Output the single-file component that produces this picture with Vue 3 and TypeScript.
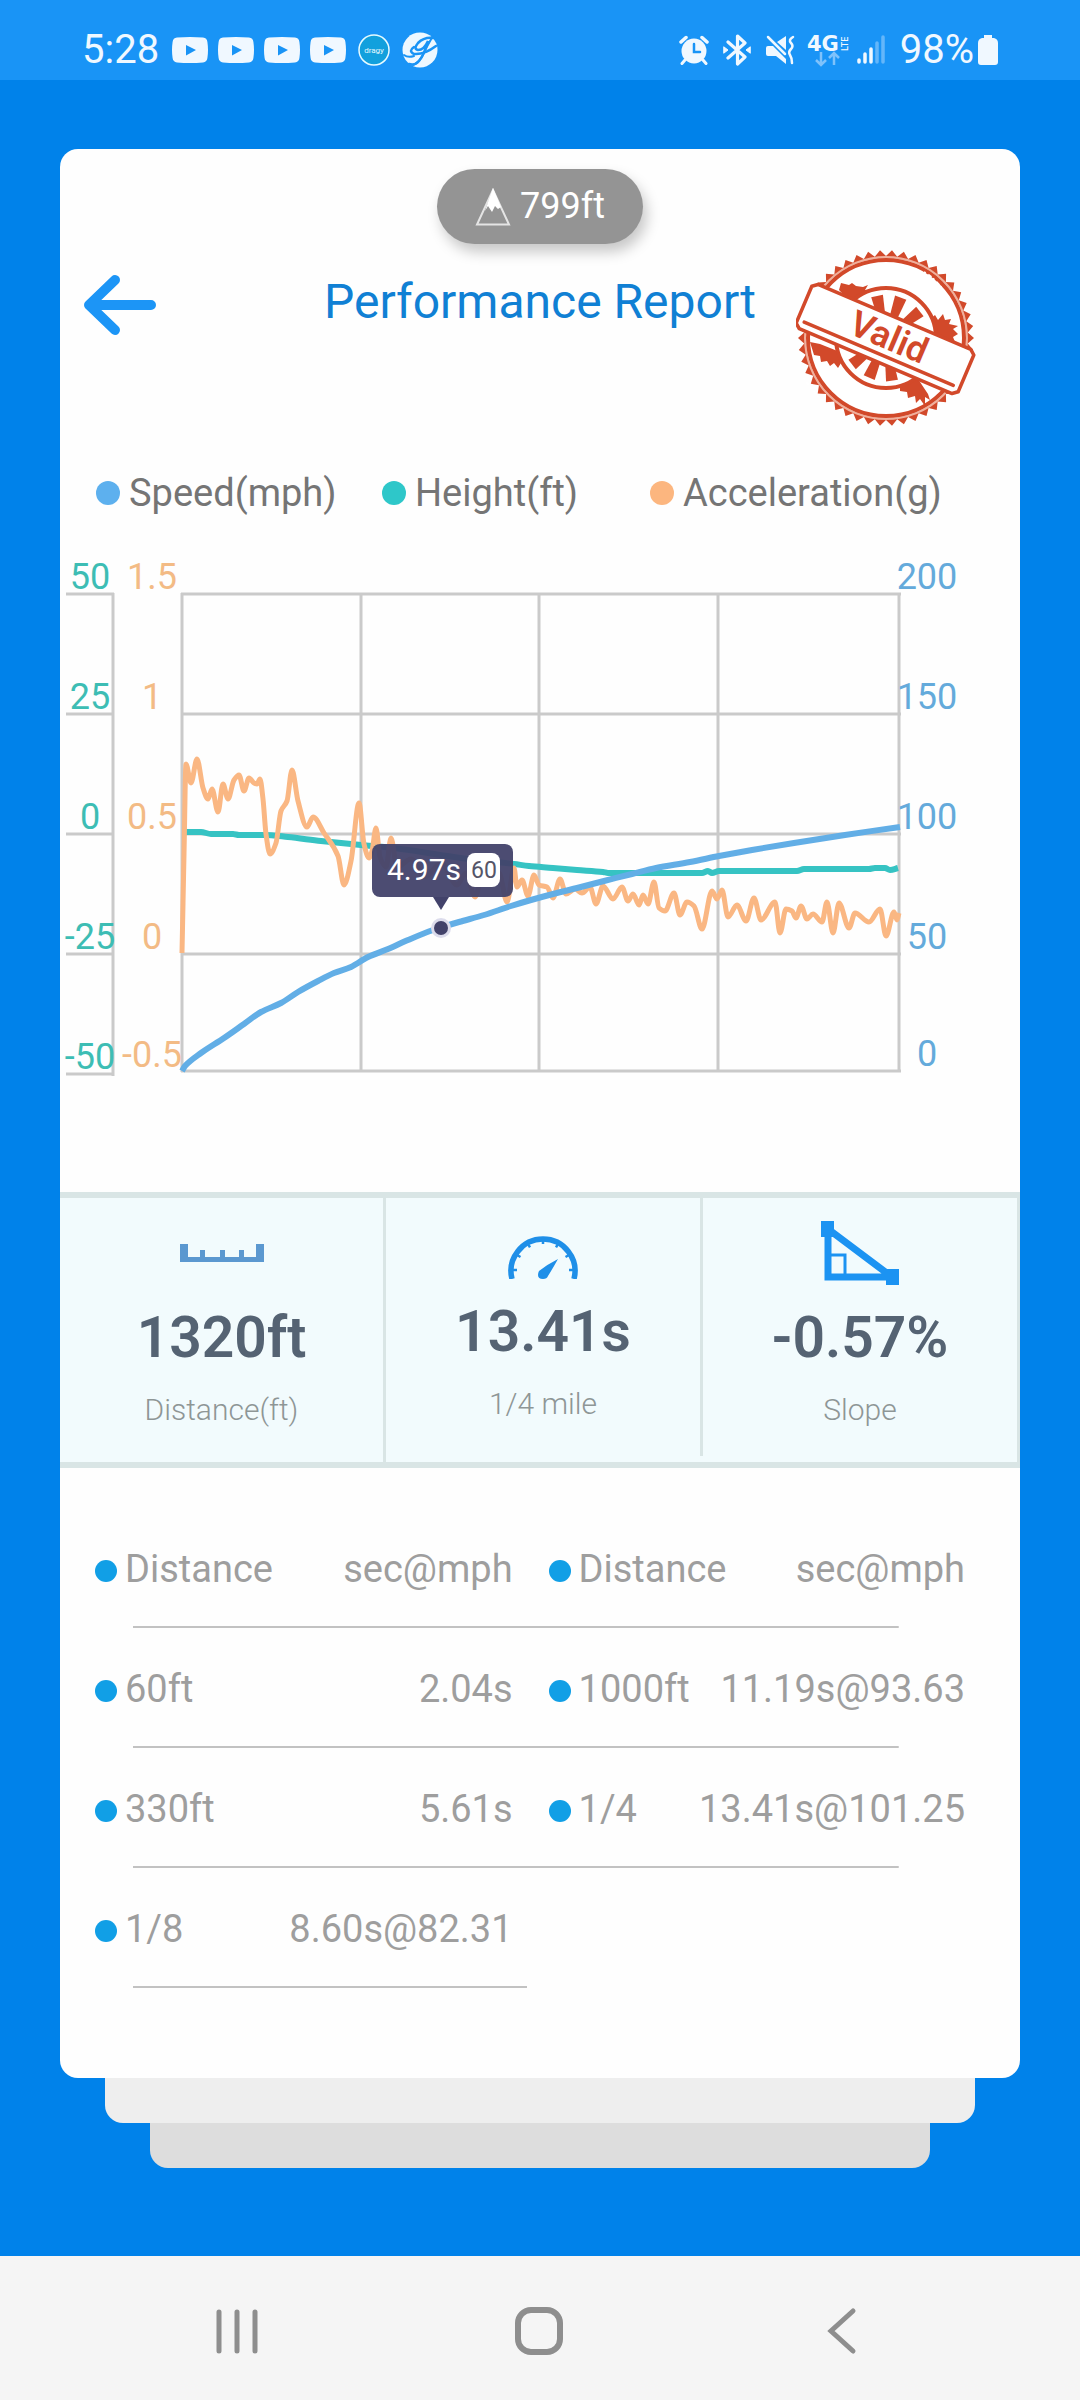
<script setup lang="ts">
type Point = [number, number]

interface Split {
  distance: string
  time: string
}

/* Smooth curve through the samples that never overshoots a peak. */
function curve(points: Point[]): string {
  const n = points.length
  const slope: number[] = []
  for (let i = 0; i < n - 1; i++) {
    slope.push((points[i + 1][1] - points[i][1]) / (points[i + 1][0] - points[i][0]))
  }
  const tangent = points.map((_, i) => {
    if (i === 0) return slope[0]
    if (i === n - 1) return slope[n - 2]
    const a = slope[i - 1]
    const b = slope[i]
    return a * b <= 0 ? 0 : (2 * a * b) / (a + b)
  })
  let d = `M${points[0][0]} ${points[0][1]}`
  for (let i = 0; i < n - 1; i++) {
    const [x0, y0] = points[i]
    const [x1, y1] = points[i + 1]
    const h = (x1 - x0) / 3
    d += `C${(x0 + h).toFixed(1)} ${(y0 + tangent[i] * h).toFixed(1)} ${(x1 - h).toFixed(1)} ${(y1 - tangent[i + 1] * h).toFixed(1)} ${x1} ${y1}`
  }
  return d
}

const speed = curve([
  [181, 1070], [184, 1065], [200, 1052], [223, 1037], [243, 1023], [260, 1011], [280, 1002], [297, 991],
  [317, 980], [333, 972], [350, 966], [367, 956], [387, 948], [407, 939], [432, 929], [458, 921],
  [483, 914], [510, 905], [530, 899], [552, 893], [576, 887], [603, 880], [631, 873], [655, 867],
  [689, 861], [718, 855], [751, 849], [793, 842], [844, 834], [899, 826],
])

const height = curve([
  [183, 831], [200, 831], [210, 833], [232, 833], [238, 834], [263, 834], [287, 836], [320, 840],
  [340, 842], [360, 844], [400, 848], [460, 857], [513, 863], [528, 865], [552, 867], [576, 869],
  [602, 871], [607, 872], [701, 872], [707, 870], [711, 872], [718, 870], [796, 870], [803, 868],
  [868, 868], [874, 867], [884, 867], [889, 869], [897, 867],
])

const acceleration = curve([
  [181, 952], [183, 853], [185, 763], [190, 782], [196, 758], [202, 787], [207, 798], [211, 788],
  [217, 811], [222, 783], [227, 798], [233, 779], [238, 774], [243, 790], [248, 777], [253, 782],
  [256, 783], [259, 778], [262, 798], [265, 833], [269, 853], [275, 842], [280, 810], [286, 800],
  [291, 769], [297, 800], [306, 826], [312, 816], [323, 832], [337, 855], [343, 884], [350, 860],
  [358, 802], [363, 843], [368, 857], [371, 850], [375, 827], [379, 856], [385, 866], [390, 837],
  [396, 866], [410, 858], [424, 876], [440, 862], [456, 884], [465, 872], [474, 896], [481, 877],
  [490, 884], [498, 872], [506, 901], [513, 867], [516, 886], [521, 879], [527, 895], [533, 874],
  [538, 884], [546, 886], [552, 897], [559, 878], [565, 893], [574, 888], [581, 892], [589, 886],
  [595, 903], [602, 885], [612, 898], [621, 886], [627, 900], [632, 893], [638, 904], [642, 894],
  [647, 903], [653, 881], [658, 907], [664, 910], [673, 892], [679, 914], [686, 901], [693, 905],
  [701, 928], [711, 890], [716, 898], [721, 889], [727, 916], [736, 904], [745, 920], [753, 897],
  [760, 919], [774, 901], [779, 932], [785, 908], [791, 910], [795, 917], [800, 905], [806, 918],
  [812, 913], [821, 921], [826, 901], [832, 932], [838, 902], [848, 927], [854, 912], [868, 921],
  [879, 908], [885, 935], [893, 911], [896, 919], [898, 912],
])

const gridX = [181, 360, 538, 717, 898]
const gridY = [593, 713, 833, 953, 1070]
const leftTicks = [593, 713, 833, 953, 1073]

const heightLabels: [string, number][] = [['50', 588], ['25', 708], ['0', 828], ['-25', 948], ['-50', 1068]]
const accelLabels: [string, number][] = [['1.5', 588], ['1', 708], ['0.5', 828], ['0', 948], ['-0.5', 1066]]
const speedLabels: [string, number][] = [['200', 588], ['150', 708], ['100', 828], ['50', 948], ['0', 1065]]

const legend = [
  { name: 'Speed(mph)', color: '#5db0ee' },
  { name: 'Height(ft)', color: '#2ec7c9' },
  { name: 'Acceleration(g)', color: '#fcb67f' },
]

const rows: [Split, Split | null][] = [
  [{ distance: '60ft', time: '2.04s' }, { distance: '1000ft', time: '11.19s@93.63' }],
  [{ distance: '330ft', time: '5.61s' }, { distance: '1/4', time: '13.41s@101.25' }],
  [{ distance: '1/8', time: '8.60s@82.31' }, null],
]

/* Toothed rim of the stamp. */
const rim = Array.from({ length: 92 }, (_, i) => {
  const a = (i / 92) * Math.PI * 2
  const r = i % 2 ? 82 : 88
  return `${(90 + r * Math.cos(a)).toFixed(1)},${(88 + r * Math.sin(a)).toFixed(1)}`
}).join(' ')

const spokes = [-12, 20, 52, 172, 203, 232]
const gaugeTicks = [-90, -60, -30, 0, 30, 60, 90]
</script>

<template>
  <div class="screen">
    <header class="status">
      <div class="status-side">
        <span class="status-text">5:28</span>
        <span class="apps">
          <svg v-for="n in 4" :key="n" width="36" height="26" viewBox="0 0 36 26" aria-hidden="true">
            <path fill="#f0f8ff" d="M5 .6Q18-.6 31 .6q4 .4 4.400 4.400Q36.600 13 35.400 21q-.4 4-4.400 4.400Q18 26.600 5 25.400q-4-.4-4.400-4.400Q-.6 13 .6 5 1 1 5 .6z" />
            <path fill="#1994f6" d="M14 8l10 5-10 5.500z" />
          </svg>
        </span>
        <svg class="dragy" width="32" height="32" viewBox="0 0 32 32" aria-hidden="true">
          <circle cx="16" cy="16" r="15" fill="#12a0dd" stroke="#e6fbff" stroke-width="1.500" />
          <text x="16" y="19" text-anchor="middle" font-size="8" fill="#e6fbff">dragy</text>
        </svg>
        <svg width="36" height="36" viewBox="0 0 36 36" aria-hidden="true">
          <circle cx="18" cy="18" r="17.500" fill="#eef8ff" />
          <g fill="none" stroke="#1994f6" stroke-linecap="round">
            <path d="M31 6Q22 5 16 11q-5 6 0 7 6 0 10-9-4 14-9 20-4 5-10 3" stroke-width="2.500" />
            <path d="M12 15Q6 19 12 22q10 1 22-8" stroke-width="2.500" />
            <path d="M31 4q-6 10-9 17-4 9-11 12M2 23q4 3 10 1" stroke-width="2" />
          </g>
        </svg>
      </div>
      <div class="status-side">
        <svg width="30" height="30" viewBox="0 0 30 30" fill="none" stroke="#f0f8ff" stroke-linecap="round" aria-hidden="true">
          <circle cx="15" cy="16" r="12.500" fill="#f0f8ff" stroke="none" />
          <path d="M2 7l5-4.500M28 7l-5-4.500" stroke-width="3.500" />
          <path d="M6 25l-3 3.500M24 25l3 3.500" stroke-width="3" />
          <path d="M15 9v8h6" stroke="#1994f6" stroke-width="2.500" />
        </svg>
        <svg class="bluetooth" width="28" height="32" viewBox="0 0 28 32" fill="none" stroke="#f0f8ff" stroke-linecap="round" stroke-linejoin="round" aria-hidden="true">
          <path d="M5 8l17 15-7.500 7V2L22 9 5 24" stroke-width="3.200" />
          <path d="M1 13l4 3-4 3zM27 13l-4 3 4 3z" fill="#f0f8ff" stroke-width="1" />
        </svg>
        <svg class="mute" width="30" height="30" viewBox="0 0 30 30" fill="#f0f8ff" aria-hidden="true">
          <path d="M1 13q0-2 2-2h5l13 13v5l-10-8H3q-2 0-2-2zM12 7l9-6v14z" />
          <path d="M3 2l17 17" stroke="#f0f8ff" stroke-width="2.500" stroke-linecap="round" />
          <path d="M28 2q-5 3-2 6t0 6-1 6 2 8" fill="none" stroke="#f0f8ff" stroke-width="2.500" stroke-linecap="round" />
        </svg>
        <svg class="network" width="42" height="34" viewBox="0 0 42 34" fill="#f0f8ff" aria-hidden="true">
          <text class="network-name" x="0" y="18">4G</text>
          <text transform="translate(41 18) rotate(-90)" font-weight="500" font-size="9">LTE</text>
          <path d="M14 19v12M9 27l5 5 5-5M27 32V20M22 25l5-5 5 5" fill="none" stroke="#7fc2fb" stroke-width="2.500" />
        </svg>
        <svg class="signal" width="28" height="30" viewBox="0 0 28 30" stroke="#f0f8ff" stroke-width="3.500" stroke-linecap="round" aria-hidden="true">
          <path d="M2 25v2M8 19v8M14 14v13" />
          <path d="M20 8v19M26 2v25" stroke="#64b6fa" />
        </svg>
        <span class="status-text battery-text">98%</span>
        <svg width="20" height="32" viewBox="0 0 20 32" fill="#f0f8ff" aria-hidden="true">
          <path d="M6 1h8v3h2q4 1 4 5v19q0 3-3 3H3q-3 0-3-3V9q0-4 4-5h2z" />
        </svg>
      </div>
    </header>

    <main class="stage">
      <section class="card">
        <div class="altitude">
          <svg width="36" height="38" viewBox="0 0 36 38" aria-hidden="true">
            <path d="M18 2L2 36.500h32z" fill="none" stroke="#e4e4e4" stroke-width="2" />
            <path d="M18 0l8 19-3 2-3-3-3 6-4-6-3 5z" fill="#fff" />
          </svg>
          <span>799ft</span>
        </div>

        <div class="heading">
          <button class="back" type="button" aria-label="Back">
            <svg width="74" height="62" viewBox="0 0 74 62" fill="none" stroke="#1c95f6" stroke-width="10" stroke-linecap="round" stroke-linejoin="round">
              <path d="M31 6L5 31l26 25M6 31h61" />
            </svg>
          </button>
          <h1>Performance Report</h1>
          <svg class="stamp" width="180" height="176" viewBox="0 0 180 176" role="img" aria-label="Valid">
            <polygon :points="rim" fill="#d2492a" />
            <circle cx="90" cy="88" r="81" fill="#fff" />
            <circle cx="90" cy="88" r="81" fill="none" stroke="#f0b09c" stroke-width="2" />
            <circle cx="90" cy="88" r="78" fill="#fff" stroke="#d2492a" stroke-width="4" />
            <g fill="#d2492a">
              <path d="M45 33l8 2 3-2 4 3 7 1 5-2-3 5 6 1-6 6-6 5-14-6-6-6z" />
              <path d="M134 69l5-4 3 5 5-6 2 6 6-1-2 5 9 2-5 3 5 5-5 3 2 5-14 2-12-8z" />
              <path d="M14 92l10 2 20 8 8 12-7-1-3 5-4-5-4 3-3-5-6 1-1-6-6-1z" />
              <path d="M104 132l16-6 12 18 2 6-5-3 0 9-5-7-4 4-1-7-7 2-1-6-7-1z" />
            </g>
            <circle cx="90" cy="88" r="50" fill="#fff" stroke="#d2492a" stroke-width="4" />
            <path v-for="a in spokes" :key="a" :transform="`rotate(${a} 90 88)`" d="M86 66L84 45h12l-2 21z" fill="#d2492a" />
            <path d="M128 22q14 8 24 26M8 128q8 14 20 24" stroke="#fff" stroke-width="2" stroke-dasharray="2 3 4 2" fill="none" />
            <g transform="rotate(23 89 89)">
              <path d="M6 65h166l5 4v40l-5 4H6l-5-4V69z" fill="#fff" stroke="#d2492a" stroke-width="3.500" stroke-linejoin="round" />
              <path d="M8 105h162" stroke="#d2492a" stroke-width="3.500" stroke-linecap="round" />
              <text x="92" y="98" text-anchor="middle" font-size="36" font-weight="600" fill="#d2492a">Valid</text>
            </g>
          </svg>
        </div>

        <ul class="legend">
          <li v-for="item in legend" :key="item.name">
            <span class="legend-dot" :style="{ background: item.color }"></span>{{ item.name }}
          </li>
        </ul>

        <svg class="chart" viewBox="59 539 960 560" role="img" aria-label="Speed, height and acceleration over time">
          <g stroke="#cacaca" stroke-width="3" fill="none">
            <path d="M112 592V1075" />
            <path v-for="y in leftTicks" :key="'t' + y" :d="`M65 ${y}H113`" />
            <path v-for="y in gridY" :key="'y' + y" :d="`M180 ${y}H900`" />
            <path v-for="x in gridX" :key="'x' + x" :d="`M${x} 592V1071`" />
          </g>
          <g font-size="36" text-anchor="middle">
            <text v-for="[t, y] in heightLabels" :key="'h' + t" x="89" :y="y" fill="#3dbdb4">{{ t }}</text>
            <text v-for="[t, y] in accelLabels" :key="'a' + t" x="151" :y="y" fill="#f3bb85">{{ t }}</text>
            <text v-for="[t, y] in speedLabels" :key="'s' + t" x="926" :y="y" fill="#64aadb">{{ t }}</text>
          </g>
          <g fill="none" stroke-linejoin="round">
            <path :d="height" stroke="#36c3c3" stroke-width="6" />
            <path :d="acceleration" stroke="#fab783" stroke-width="5" />
            <path :d="speed" stroke="#62aee6" stroke-width="6" />
          </g>
          <circle cx="440" cy="927" r="10" fill="#dcdcec" />
          <circle cx="440" cy="927" r="7" fill="#42426a" />
          <path d="M432 896h16l-8 13z" fill="#42426a" />
          <rect x="371" y="843" width="141" height="53" rx="8" fill="#42426a" fill-opacity=".95" />
          <text x="386" y="879" font-size="30" fill="#fff">4.97s</text>
          <rect x="466" y="852" width="33" height="34" rx="8" fill="#fff" />
          <text x="483" y="877" font-size="23" text-anchor="middle" fill="#555568">60</text>
        </svg>

        <dl class="stats">
          <div class="stat">
            <svg class="ruler" width="84" height="18" viewBox="0 0 84 18" fill="#5b98d0" aria-hidden="true">
              <path d="M0 0h8v13h12V6h5v7h15V6h5v7h14V6h5v7h12V0h8v18H0z" />
            </svg>
            <dd>1320ft</dd>
            <dt>Distance(ft)</dt>
          </div>
          <div class="stat raised">
            <svg class="gauge" width="70" height="46" viewBox="0 0 70 46" fill="none" stroke="#1f8fe8" aria-hidden="true">
              <path d="M4 46a32 32 0 1 1 62 0" stroke-width="5.500" />
              <path v-for="a in gaugeTicks" :key="a" :transform="`rotate(${a} 35 37)`" d="M35 5v6" stroke-width="2.500" />
              <path d="M31 38Q40 31 50 26q-5 9-10 17-1 3-5 3-5 0-5-4 0-2 1-4z" fill="#1f8fe8" stroke="none" />
            </svg>
            <dd>13.41s</dd>
            <dt>1/4 mile</dt>
          </div>
          <div class="stat">
            <svg class="slope" width="78" height="64" viewBox="0 0 78 64" fill="none" stroke="#1c93f2" aria-hidden="true">
              <path d="M7 8v48h64z" stroke-width="7" />
              <path d="M7 34h17v22" stroke-width="3" />
              <path d="M0 0h13v16H0zM65 48h13v16H65z" fill="#1c93f2" stroke="none" />
            </svg>
            <dd>-0.57%</dd>
            <dt>Slope</dt>
          </div>
        </dl>

        <table class="splits">
          <colgroup>
            <col class="c-distance" />
            <col class="c-time" />
            <col class="c-distance-two" />
            <col class="c-time" />
          </colgroup>
          <thead>
            <tr>
              <th scope="col" class="distance">Distance</th>
              <th scope="col" class="time">sec@mph</th>
              <th scope="col" class="distance second">Distance</th>
              <th scope="col" class="time">sec@mph</th>
            </tr>
          </thead>
          <tbody>
            <tr v-for="[a, b] in rows" :key="a.distance" :class="{ half: !b }">
              <td class="distance">{{ a.distance }}</td>
              <td class="time">{{ a.time }}</td>
              <template v-if="b">
                <td class="distance second">{{ b.distance }}</td>
                <td class="time">{{ b.time }}</td>
              </template>
              <td v-else colspan="2"></td>
            </tr>
          </tbody>
        </table>
      </section>
      <div class="sheet sheet-near"></div>
      <div class="sheet sheet-far"></div>
    </main>

    <nav class="system-nav">
      <button type="button" aria-label="Recent apps">
        <svg width="48" height="48" viewBox="0 0 48 48" fill="none" stroke="#8e8e8e" stroke-width="5" stroke-linecap="round">
          <path d="M6 5v39M24 5v39M42 5v39" />
        </svg>
      </button>
      <button type="button" aria-label="Home">
        <svg width="48" height="48" viewBox="0 0 48 48" fill="none" stroke="#8e8e8e" stroke-width="6">
          <rect x="3" y="3" width="42" height="42" rx="13" />
        </svg>
      </button>
      <button type="button" aria-label="Back">
        <svg width="48" height="48" viewBox="0 0 48 48" fill="none" stroke="#8e8e8e" stroke-width="5" stroke-linecap="round" stroke-linejoin="miter">
          <path d="M36 4L14 24l22 20" />
        </svg>
      </button>
    </nav>
  </div>
</template>

<style>
body {
  margin: 0;
  background: #0082ea;
}
</style>

<style scoped>
.screen {
  display: flex;
  flex-direction: column;
  min-height: 100vh;
  background: #0082ea;
  font-family: Roboto, "Liberation Sans", sans-serif;
}

.screen svg {
  display: block;
  flex: none;
}

.screen button {
  padding: 0;
  border: 0;
  background: none;
}

.status {
  display: flex;
  justify-content: space-between;
  align-items: center;
  height: 60px;
  padding: 20px 82px 0;
  background: #1994f6;
}

.status-side {
  display: flex;
  align-items: center;
}

.status-text {
  font-size: 40px;
  line-height: 48px;
  color: #f0f8ff;
}

.apps {
  display: flex;
  gap: 10px;
  margin-left: 13px;
}

.dragy {
  margin: 0 12px;
}

.bluetooth {
  margin: 0 14px;
}

.network {
  margin: 0 8px 0 12px;
}

.network-name {
  font-family: "DejaVu Sans", sans-serif;
  font-size: 21px;
  font-weight: 700;
}

.battery-text {
  margin: 0 4px 0 15px;
}

.stage {
  flex: 1;
  padding: 69px 60px 87px;
}

.card {
  position: relative;
  z-index: 2;
  overflow: hidden;
  padding: 20px 0 90px;
  border-radius: 18px;
  background: #fefefe;
}

.altitude {
  display: flex;
  justify-content: center;
  align-items: center;
  gap: 9px;
  width: fit-content;
  height: 75px;
  margin: 0 auto;
  padding: 0 38px;
  border-radius: 38px;
  background: #949494;
  box-shadow: 4px 8px 14px rgba(0, 0, 0, .22);
  color: #fff;
  font-size: 36px;
  line-height: 44px;
}

.altitude span {
  margin-bottom: 2px;
}

.heading {
  display: grid;
  grid-template-columns: 1fr auto 1fr;
  align-items: start;
  margin-top: 6px;
  padding: 0 24px;
}

.back {
  justify-self: start;
  margin: 24px 0 0;
}

h1 {
  margin: 24px 0 0;
  color: #1080d4;
  font-size: 48px;
  font-weight: 400;
  line-height: 56px;
}

.stamp {
  justify-self: end;
  margin-right: 20px;
}

.legend {
  display: grid;
  grid-template-columns: 286fr 268fr 334fr;
  margin: 45px 0 25px;
  padding: 0 36px;
  list-style: none;
  color: #757575;
  font-size: 38px;
  line-height: 44px;
}

.legend li {
  display: flex;
  align-items: center;
  gap: 9px;
}

.legend-dot {
  width: 24px;
  height: 24px;
  border-radius: 50%;
}

.chart {
  width: 100%;
  height: auto;
  margin-bottom: 92px;
}

.stats {
  display: grid;
  grid-template-columns: 326fr 317fr 317fr;
  margin: 0;
  border: solid #d9e5e5;
  border-width: 6px 0;
  background: #f2fbfd;
}

.stat {
  display: flex;
  flex-direction: column;
  justify-content: flex-end;
  align-items: center;
  box-sizing: border-box;
  height: 264px;
  padding-bottom: 34px;
  border-right: 3px solid #d9e5e5;
}

.raised {
  height: 258px;
}

.ruler {
  margin-bottom: 44px;
}

.gauge,
.slope {
  margin-bottom: 21px;
}

.stat dd {
  margin: 0;
  color: #556373;
  font-size: 57px;
  font-weight: 600;
  line-height: 64px;
}

.stat dt {
  margin-top: 22px;
  color: #8e9696;
  font-size: 30px;
  font-weight: 300;
  line-height: 36px;
}

.splits {
  width: calc(100% - 90px);
  margin: 40px 55px 0 35px;
  border-collapse: collapse;
  table-layout: fixed;
  color: #9e9e9e;
  font-size: 38px;
  line-height: 44px;
}

.c-distance {
  width: 17%;
}

.c-distance-two {
  width: 21%;
}

.c-time {
  width: 31%;
}

.splits tr {
  height: 120px;
  background: linear-gradient(#c2c2c2, #c2c2c2) 38px 100% / calc(100% - 104px) 2px no-repeat;
}

.splits tr.half {
  background-size: calc(50% - 41px) 2px;
}

.splits th,
.splits td {
  box-sizing: border-box;
  height: 120px;
  padding: 2px 0 0;
  font-weight: 400;
  white-space: nowrap;
}

.distance {
  text-align: left;
}

.distance::before {
  content: "";
  display: inline-block;
  width: 22px;
  height: 22px;
  margin-right: 8px;
  border-radius: 50%;
  background: #119fe6;
}

.splits .second {
  padding-left: 36px;
}

.time {
  text-align: right;
}

.sheet {
  height: 45px;
  border-radius: 0 0 18px 18px;
}

.sheet-near {
  margin: 0 45px;
  background: #eee;
}

.sheet-far {
  margin: 0 90px;
  background: #ddd;
}

.system-nav {
  display: flex;
  justify-content: center;
  align-items: flex-start;
  gap: 254px;
  height: 93px;
  padding: 51px 2px 0 0;
  background: #f5f5f5;
}
</style>
